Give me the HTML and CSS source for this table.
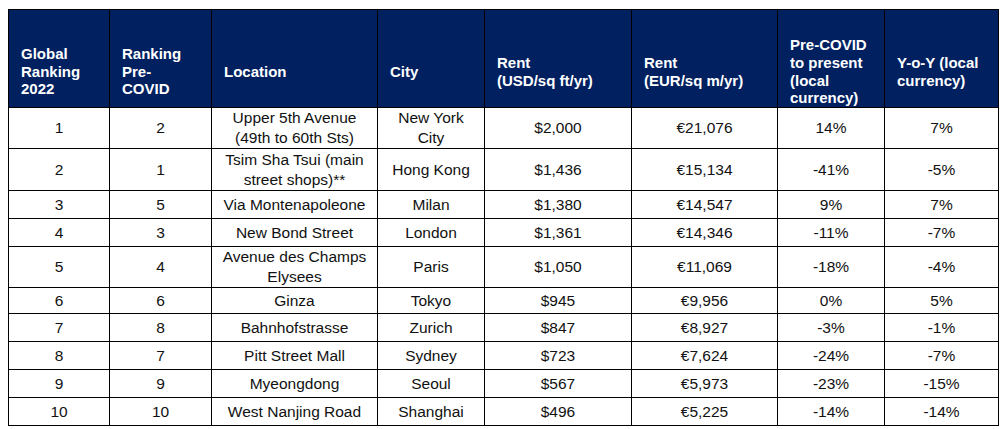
FILE: index.html
```html
<!DOCTYPE html>
<html>
<head>
<meta charset="utf-8">
<link rel="stylesheet" href="styles.css">
</head>
<body>
<table class="rank">
  <colgroup>
    <col class="c1"><col class="c2"><col class="c3"><col class="c4"><col class="c5"><col class="c6"><col class="c7"><col class="c8">
  </colgroup>
  <thead>
    <tr class="head">
      <th>Global<br>Ranking<br>2022</th>
      <th>Ranking<br>Pre-<br>COVID</th>
      <th>Location</th>
      <th>City</th>
      <th>Rent<br>(USD/sq ft/yr)</th>
      <th>Rent<br>(EUR/sq m/yr)</th>
      <th>Pre-COVID<br>to present<br>(local<br>currency)</th>
      <th>Y-o-Y (local<br>currency)</th>
    </tr>
  </thead>
  <tbody>
    <tr class="h41"><td>1</td><td>2</td><td>Upper 5th Avenue<br>(49th to 60th Sts)</td><td>New York<br>City</td><td>$2,000</td><td>€21,076</td><td>14%</td><td>7%</td></tr>
    <tr class="h42"><td>2</td><td>1</td><td>Tsim Sha Tsui (main<br>street shops)**</td><td>Hong Kong</td><td>$1,436</td><td>€15,134</td><td>-41%</td><td>-5%</td></tr>
    <tr class="h28"><td>3</td><td>5</td><td>Via Montenapoleone</td><td>Milan</td><td>$1,380</td><td>€14,547</td><td>9%</td><td>7%</td></tr>
    <tr class="h28"><td>4</td><td>3</td><td>New Bond Street</td><td>London</td><td>$1,361</td><td>€14,346</td><td>-11%</td><td>-7%</td></tr>
    <tr class="h41"><td>5</td><td>4</td><td>Avenue des Champs<br>Elysees</td><td>Paris</td><td>$1,050</td><td>€11,069</td><td>-18%</td><td>-4%</td></tr>
    <tr class="h26"><td>6</td><td>6</td><td>Ginza</td><td>Tokyo</td><td>$945</td><td>€9,956</td><td>0%</td><td>5%</td></tr>
    <tr class="h28"><td>7</td><td>8</td><td>Bahnhofstrasse</td><td>Zurich</td><td>$847</td><td>€8,927</td><td>-3%</td><td>-1%</td></tr>
    <tr class="h28"><td>8</td><td>7</td><td>Pitt Street Mall</td><td>Sydney</td><td>$723</td><td>€7,624</td><td>-24%</td><td>-7%</td></tr>
    <tr class="h28"><td>9</td><td>9</td><td>Myeongdong</td><td>Seoul</td><td>$567</td><td>€5,973</td><td>-23%</td><td>-15%</td></tr>
    <tr class="h28"><td>10</td><td>10</td><td>West Nanjing Road</td><td>Shanghai</td><td>$496</td><td>€5,225</td><td>-14%</td><td>-14%</td></tr>
  </tbody>
</table>
</body>
</html>
```
FILE: styles.css
```css
html, body {
  background: #ffffff;
}
body {
  margin: 9px 0 0 8px;
  font-family: "Liberation Sans", Arial, sans-serif;
  color: #000000;
}
.rank {
  border-collapse: collapse;
  table-layout: fixed;
  width: 991px;
}
.c1 { width: 101px; }
.c2 { width: 102px; }
.c3 { width: 166px; }
.c4 { width: 107px; }
.c5 { width: 147px; }
.c6 { width: 146px; }
.c7 { width: 107px; }
.c8 { width: 114px; }
.rank th, .rank td {
  border: 1px solid #000000;
}
.rank th {
  background: #002060;
  color: #ffffff;
  font-weight: bold;
  font-size: 15px;
  line-height: 17.6px;
  text-align: left;
  vertical-align: middle;
  padding: 26px 4px 0 12px;
  height: 71px;
}
.rank td {
  font-size: 15.5px;
  line-height: 20px;
  text-align: center;
  vertical-align: middle;
  padding: 0 2px;
  color: #111111;
}
.h41 td { height: 40px; }
.h42 td { height: 41px; }
.h28 td { height: 27px; }
.h26 td { height: 25px; }
```
